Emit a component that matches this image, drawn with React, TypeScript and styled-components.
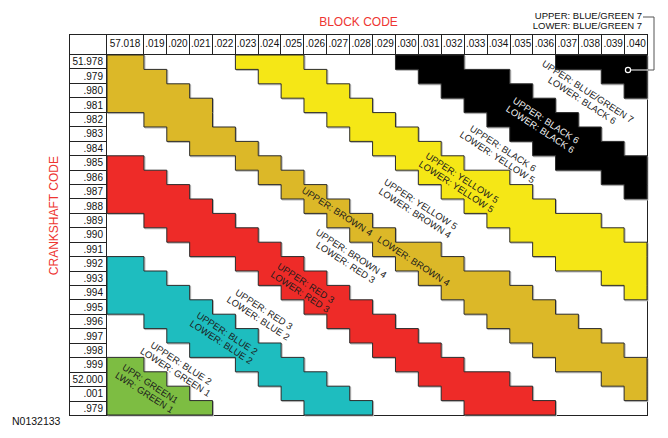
import React from "react";
import styled, { createGlobalStyle } from "styled-components";

const GlobalStyle = createGlobalStyle`
  html, body { margin: 0; padding: 0; background: #ffffff; }
  body { font-family: "Liberation Sans", Arial, sans-serif; color: #111; }
`;

const COLS = [
  "57.018", ".019", ".020", ".021", ".022", ".023", ".024", ".025", ".026", ".027", ".028", ".029",
  ".030", ".031", ".032", ".033", ".034", ".035", ".036", ".037", ".038", ".039", ".040",
];
const ROWS = [
  "51.978", ".979", ".980", ".981", ".982", ".983", ".984", ".985", ".986", ".987", ".988", ".989",
  ".990", ".991", ".992", ".993", ".994", ".995", ".996", ".997", ".998", ".999", "52.000", ".001", ".979",
];

const CHART_W = 541;
const CHART_H = 361;
const FIRST_W = 37;
const COL_W = (CHART_W - FIRST_W) / 22;
const ROW_H = CHART_H / 25;
const colX = (j: number) => (j === 0 ? 0 : FIRST_W + (j - 1) * COL_W);
const rowY = (i: number) => i * ROW_H;

const baseLower = (k: number) => (k <= 3 ? 0 : k <= 6 ? k - 3 : k <= 21 ? k - 2 : k - 1);
const baseUpper = (k: number) => (k <= 14 ? k : Math.min(22, k + 1));

type Band = {
  color: string;
  offset: number;
  upper?: (k: number) => number;
};

const BANDS: Band[] = [
  { color: "#000000", offset: -21 },
  { color: "#000000", offset: -14 },
  {
    color: "#f5e716",
    offset: -7,
    upper: (k) => (k >= 18 ? Math.min(22, k + 2) : baseUpper(k)),
  },
  {
    color: "#dcb828",
    offset: 0,
    upper: (k) => (k >= 4 && k <= 12 ? k - 1 : baseUpper(k)),
  },
  { color: "#ee2b28", offset: 7 },
  { color: "#1ebdbf", offset: 14 },
  { color: "#7dbd42", offset: 21 },
];

function bandPath(b: Band) {
  const up = b.upper ?? baseUpper;
  const rows: number[] = [];
  for (let r = Math.max(0, b.offset); r <= Math.min(24, b.offset + 23); r++) rows.push(r);
  const right: string[] = [];
  const left: string[] = [];
  rows.forEach((r) => {
    const k = r - b.offset;
    const xr = colX(up(k) + 1);
    const xl = colX(baseLower(k));
    right.push(`${xr},${rowY(r)}`, `${xr},${rowY(r + 1)}`);
    left.unshift(`${xl},${rowY(r + 1)}`, `${xl},${rowY(r)}`);
  });
  return "M" + [...right, ...left].join(" L") + " Z";
}

type Label = { lines: string[]; x: number; y: number; light?: boolean };
const LABELS: Label[] = [
  { lines: ["UPPER: BLUE/GREEN 7", "LOWER: BLACK 6"], x: 585, y: 95 },
  { lines: ["UPPER: BLACK 6", "LOWER: BLACK 6"], x: 543, y: 124, light: true },
  { lines: ["UPPER: BLACK 6", "LOWER: YELLOW 5"], x: 500, y: 152 },
  { lines: ["UPPER: YELLOW 5", "LOWER: YELLOW 5"], x: 459, y: 181.5 },
  { lines: ["UPPER: YELLOW 5", "LOWER: BROWN 4"], x: 417.5, y: 208 },
  { lines: ["UPPER: BROWN 4\u00a0\u00a0\u00a0LOWER: BROWN 4"], x: 375.5, y: 236 },
  { lines: ["UPPER: BROWN 4", "LOWER: RED 3"], x: 348, y: 257.5 },
  { lines: ["UPPER: RED 3", "LOWER: RED 3"], x: 302.5, y: 287 },
  { lines: ["UPPER: RED 3", "LOWER: BLUE 2"], x: 260.5, y: 313.5 },
  { lines: ["UPPER: BLUE 2", "LOWER: BLUE 2"], x: 223.5, y: 337.5 },
  { lines: ["UPPER: BLUE 2", "LOWER: GREEN 1"], x: 177.5, y: 367.5 },
  { lines: ["UPR: GREEN1", "LWR: GREEN 1"], x: 146.5, y: 388 },
];

const Page = styled.div`
  position: relative;
  width: 668px;
  height: 438px;
  display: grid;
  grid-template-columns: 69px 579px 20px;
  grid-template-rows: 34px 382px 22px;
  background: #fff;
  overflow: hidden;
`;

const TopBar = styled.div`
  grid-column: 2;
  grid-row: 1;
  display: grid;
  grid-template-columns: 1fr auto 1fr;
  align-items: start;
`;

const Title = styled.div`
  grid-column: 2;
  padding-top: 15px;
  font-size: 12px;
  line-height: 14px;
  color: #ee3532;
`;

const Callout = styled.div`
  grid-column: 3;
  justify-self: end;
  padding-top: 11px;
  padding-right: 6px;
  font-size: 9.5px;
  line-height: 10px;
  text-align: right;
  color: #111;
`;

const SideLabel = styled.div`
  grid-column: 1;
  grid-row: 2;
  display: flex;
  justify-content: flex-end;
  align-items: flex-start;
  padding-top: 122px;
  padding-right: 8px;
`;

const SideText = styled.span`
  writing-mode: vertical-rl;
  transform: rotate(180deg);
  font-size: 12px;
  line-height: 14px;
  color: #ee3532;
  white-space: nowrap;
`;

const Table = styled.div`
  grid-column: 2;
  grid-row: 2;
  display: grid;
  grid-template-columns: 37px 37px repeat(22, 1fr);
  grid-template-rows: 20px repeat(25, 1fr);
  border-top: 1px solid #222;
  border-left: 1px solid #222;
  box-sizing: border-box;
`;

const HeadCell = styled.div`
  box-sizing: border-box;
  border-right: 1px solid #222;
  border-bottom: 1px solid #222;
  display: flex;
  align-items: center;
  justify-content: center;
  padding-bottom: 2px;
  font-size: 10px;
  color: #111;
  white-space: nowrap;
  overflow: hidden;
`;

const RowHead = styled.div`
  box-sizing: border-box;
  border-right: 1px solid #222;
  border-bottom: 1px solid #222;
  display: flex;
  align-items: center;
  justify-content: flex-end;
  padding-right: 3px;
  font-size: 10px;
  color: #111;
  white-space: nowrap;
`;

const DataArea = styled.div`
  grid-column: 2 / -1;
  grid-row: 2 / -1;
  box-sizing: border-box;
  border-right: 1px solid #222;
  border-bottom: 1px solid #222;
  position: relative;
`;

const ChartSvg = styled.svg`
  display: block;
  width: 100%;
  height: 100%;
  overflow: visible;
`;

const Footer = styled.div`
  grid-column: 1 / span 2;
  grid-row: 3;
  padding-left: 12px;
  margin-top: -1px;
  font-size: 10.5px;
  line-height: 12px;
  color: #111;
`;

const LeaderSvg = styled.svg`
  position: absolute;
  left: 0;
  top: 0;
  width: 668px;
  height: 438px;
  pointer-events: none;
`;

function Chart() {
  return (
    <ChartSvg viewBox={`0 0 ${CHART_W} ${CHART_H}`} preserveAspectRatio="none">
      {BANDS.map((b, i) => {
        const d = bandPath(b);
        return (
          <g key={i}>
            <path d={d} transform="translate(1 1)" fill="none" stroke="#b5b5b5" strokeWidth={1} />
            <path d={d} fill={b.color} stroke="#2a2a2a" strokeWidth={1} />
          </g>
        );
      })}
      {LABELS.map((l, i) => {
        const cx = l.x - 106;
        const cy = l.y - 54;
        const n = l.lines.length;
        const lh = 10.5;
        const base = cy - ((n - 1) * lh) / 2 + 3.4;
        return (
          <text
            key={i}
            transform={`rotate(33 ${cx} ${cy})`}
            textAnchor="middle"
            fontFamily='"Liberation Sans", Arial, sans-serif'
            fontSize={9.5}
            fill={l.light ? "#f2f2f2" : "#1c1c1c"}
          >
            {l.lines.map((t, j) => (
              <tspan key={j} x={cx} y={base + j * lh}>
                {t}
              </tspan>
            ))}
          </text>
        );
      })}
    </ChartSvg>
  );
}

export default function App() {
  return (
    <>
      <GlobalStyle />
      <Page>
        <TopBar>
          <Title>BLOCK CODE</Title>
          <Callout>
            <div>UPPER: BLUE/GREEN 7</div>
            <div>LOWER: BLUE/GREEN 7</div>
          </Callout>
        </TopBar>
        <SideLabel>
          <SideText>CRANKSHAFT CODE</SideText>
        </SideLabel>
        <Table>
          <DataArea>
            <Chart />
          </DataArea>
          <HeadCell />
          {COLS.map((c, i) => (
            <HeadCell key={i}>{c}</HeadCell>
          ))}
          {ROWS.map((r, i) => (
            <RowHead key={i}>{r}</RowHead>
          ))}
        </Table>
        <Footer>N0132133</Footer>
        <LeaderSvg viewBox="0 0 668 438">
          <polyline points="643,17 654,17 654,70 648,70" fill="none" stroke="#555" strokeWidth={1} />
          <line x1={648} y1={70} x2={631} y2={70} stroke="#fff" strokeWidth={1} />
          <circle cx={628} cy={70} r={2.6} fill="#000" stroke="#fff" strokeWidth={1.2} />
        </LeaderSvg>
      </Page>
    </>
  );
}
